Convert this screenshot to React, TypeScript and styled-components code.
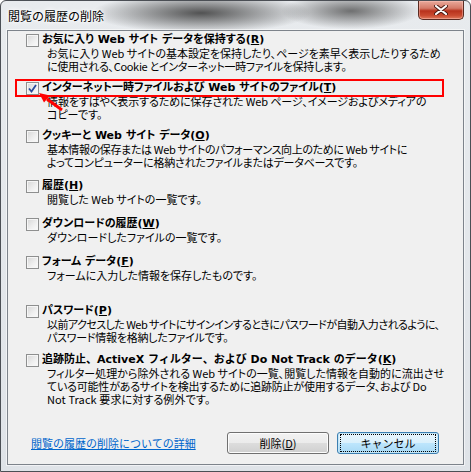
import React from "react";
import styled, { createGlobalStyle } from "styled-components";

const FONT = `"Noto Sans CJK JP", "Noto Sans", sans-serif`;
const TITLE_FONT = `"DejaVu Sans", "Noto Sans CJK JP", sans-serif`;

const Global = createGlobalStyle`
  html, body { margin: 0; padding: 0; background: #ffffff; }
  body { width: 471px; height: 472px; overflow: hidden; }
  * { box-sizing: border-box; }
`;

const Window = styled.div`
  position: relative;
  width: 471px;
  height: 472px;
  border: 1px solid #4b4f55;
  border-radius: 6px 6px 0 0;
  background:
    radial-gradient(ellipse 110px 20px at 200px 12px, rgba(55, 55, 55, 0.85), rgba(55, 55, 55, 0) 100%),
    radial-gradient(ellipse 70px 18px at 350px 10px, rgba(70, 70, 70, 0.75), rgba(70, 70, 70, 0) 100%),
    linear-gradient(180deg, #e8ebee 0%, #dfe3e8 100%);
  display: flex;
  flex-direction: column;
  padding: 0 6px 6px 6px;
  font-family: ${FONT};
`;

const TitleBar = styled.div`
  height: 29px;
  display: flex;
  justify-content: space-between;
  align-items: flex-start;
  padding-left: 1px;
`;

const TitleText = styled.div`
  font-size: 12px;
  line-height: 14px;
  margin-top: 8px;
  color: #000;
  text-shadow: 0 0 6px #fff, 0 0 4px #fff, 0 0 2px #fff;
`;

const CloseButton = styled.div`
  width: 46px;
  height: 19px;
  border: 1px solid #5a2b22;
  border-top: none;
  border-radius: 0 0 5px 5px;
  background: linear-gradient(180deg, #e9a99b 0%, #d47a68 40%, #b8321c 55%, #c94a30 80%, #e07a5c 100%);
  box-shadow: inset 0 0 0 1px rgba(255, 200, 190, 0.45);
  display: flex;
  align-items: center;
  justify-content: center;
`;

const Panel = styled.div`
  position: relative;
  flex: 1;
  background: #f0f0f0;
  border: 1px solid #7d838b;
  box-shadow: 0 0 0 1px rgba(255, 255, 255, 0.55);
  display: flex;
  flex-direction: column;
  padding: 2px 0 10px 18px;
`;

const Item = styled.div<{ $top: number }>`
  margin-top: ${(p) => p.$top}px;
  display: flex;
  flex-direction: column;
`;

const TitleRow = styled.div`
  display: flex;
  align-items: center;
  gap: 3px;
  height: 14px;
`;

const Box = styled.div`
  width: 13px;
  height: 13px;
  border: 1px solid #8e8f8f;
  background: linear-gradient(135deg, #d6d6d6 0%, #f0f0f0 60%, #fbfbfb 100%);
  box-shadow: inset 0 0 0 1px #f6f6f6;
  display: flex;
  align-items: center;
  justify-content: center;
  flex: none;
`;

const Title = styled.div<{ $wide?: boolean }>`
  font-family: ${TITLE_FONT};
  font-size: 11px;
  font-weight: bold;
  line-height: 14px;
  white-space: nowrap;
  color: #000;
  font-feature-settings: ${(p) => (p.$wide ? "normal" : `"palt"`)};
`;

const Desc = styled.div<{ $ls?: number }>`
  margin-left: 21px;
  font-size: 11px;
  line-height: 13px;
  white-space: nowrap;
  color: #000;
  font-feature-settings: "palt";
  letter-spacing: ${(p) => p.$ls ?? 0}px;
`;

const Highlight = styled.div`
  position: absolute;
  left: 7px;
  top: 48px;
  width: 429px;
  height: 18px;
  border: 2px solid #ff0000;
  pointer-events: none;
`;

const Arrow = styled.svg`
  position: absolute;
  left: 28px;
  top: 59px;
`;

const Footer = styled.div`
  margin-top: auto;
  display: flex;
  align-items: center;
  padding-right: 24px;
`;

const HelpLink = styled.a`
  flex: 1;
  margin-left: 5px;
  font-size: 11px;
  line-height: 14px;
  color: #0066cc;
  text-decoration: underline;
  cursor: pointer;
`;

const Buttons = styled.div`
  display: flex;
  gap: 8px;
`;

const Button = styled.button<{ $default?: boolean }>`
  width: 102px;
  height: 22px;
  padding: 0;
  font-family: ${FONT};
  font-size: 11px;
  color: #000;
  border-radius: 3px;
  border: 1px solid ${(p) => (p.$default ? "#3c7fb1" : "#707070")};
  background: ${(p) =>
    p.$default
      ? "linear-gradient(180deg, #eaf6fd 0%, #d9f0fc 50%, #bee6fd 50%, #a7d9f5 100%)"
      : "linear-gradient(180deg, #f2f2f2 0%, #ebebeb 50%, #dddddd 50%, #cfcfcf 100%)"};
  box-shadow: inset 0 0 0 1px ${(p) => (p.$default ? "#c4e5f6" : "#fcfcfc")};
  display: flex;
  align-items: center;
  justify-content: center;
`;

const Focus = styled.span`
  display: flex;
  align-items: center;
  justify-content: center;
  width: 94px;
  height: 16px;
  outline: 1px dotted #000;
`;

const Check = () => (
  <svg width="9" height="9" viewBox="0 0 9 9">
    <path d="M1 4.5 L3.5 7.5 L8 1" fill="none" stroke="#2a4b9b" strokeWidth="1.8" />
  </svg>
);

type Line = { text: string; ls?: number };
type Entry = { top: number; title: React.ReactNode; desc: Line[]; checked?: boolean; wide?: boolean };

const entries: Entry[] = [
  {
    top: 0,
    title: <>お気に入り Web サイト データを保持する(<u>R</u>)</>,
    desc: [
      { text: "お気に入り Web サイトの基本設定を保持したり、ページを素早く表示したりするため" },
      { text: "に使用される、Cookie とインターネット一時ファイルを保持します。", ls: -0.3 },
    ],
  },
  {
    top: 8,
    checked: true,
    title: <>インターネット一時ファイルおよび Web サイトのファイル(<u>T</u>)</>,
    desc: [
      { text: "情報をすばやく表示するために保存された Web ページ、イメージおよびメディアの", ls: -0.1 },
      { text: "コピーです。" },
    ],
  },
  {
    top: 8,
    title: <>クッキーと Web サイト データ(<u>O</u>)</>,
    desc: [
      { text: "基本情報の保存または Web サイトのパフォーマンス向上のために Web サイトに", ls: -0.35 },
      { text: "よってコンピューターに格納されたファイルまたはデータベースです。", ls: -0.25 },
    ],
  },
  { top: 10, title: <>履歴(<u>H</u>)</>, desc: [{ text: "閲覧した Web サイトの一覧です。" }] },
  { top: 11, title: <>ダウンロードの履歴(<u>W</u>)</>, desc: [{ text: "ダウンロードしたファイルの一覧です。" }] },
  { top: 11, title: <>フォーム データ(<u>F</u>)</>, desc: [{ text: "フォームに入力した情報を保存したものです。" }] },
  {
    top: 22,
    title: <>パスワード(<u>P</u>)</>,
    desc: [
      { text: "以前アクセスした Web サイトにサインインするときにパスワードが自動入力されるように、", ls: -0.55 },
      { text: "パスワード情報を格納したファイルです。", ls: -0.25 },
    ],
  },
  {
    top: 9,
    wide: true,
    title: <>追跡防止、ActiveX フィルター、および Do Not Track のデータ(<u>K</u>)</>,
    desc: [
      { text: "フィルター処理から除外される Web サイトの一覧、閲覧した情報を自動的に流出させ" },
      { text: "ている可能性があるサイトを検出するために追跡防止が使用するデータ、および Do", ls: -0.2 },
      { text: "Not Track 要求に対する例外です。", ls: 0.1 },
    ],
  },
];

export default function App() {
  return (
    <>
      <Global />
      <Window>
        <TitleBar>
          <TitleText>閲覧の履歴の削除</TitleText>
          <CloseButton>
            <svg width="14" height="10" viewBox="0 0 14 10">
              <path d="M2 1 L12 9 M12 1 L2 9" stroke="#4a1a12" strokeWidth="4" strokeLinecap="round" />
              <path d="M2 1 L12 9 M12 1 L2 9" stroke="#ffffff" strokeWidth="2.2" strokeLinecap="round" />
            </svg>
          </CloseButton>
        </TitleBar>
        <Panel>
          {entries.map((e, i) => (
            <Item key={i} $top={e.top}>
              <TitleRow>
                <Box>{e.checked && <Check />}</Box>
                <Title $wide={e.wide}>{e.title}</Title>
              </TitleRow>
              {e.desc.map((d, j) => (
                <Desc key={j} $ls={d.ls}>
                  {d.text}
                </Desc>
              ))}
            </Item>
          ))}
          <Footer>
            <HelpLink>閲覧の履歴の削除についての詳細</HelpLink>
            <Buttons>
              <Button>
                削除(<u>D</u>)
              </Button>
              <Button $default>
                <Focus>キャンセル</Focus>
              </Button>
            </Buttons>
          </Footer>
          <Highlight />
          <Arrow width="30" height="24" viewBox="0 0 30 24">
            <line x1="26" y1="20" x2="11" y2="9" stroke="#ff0000" strokeWidth="3" />
            <polygon points="3,3 14,5.5 8,12.5" fill="#ff0000" />
          </Arrow>
        </Panel>
      </Window>
    </>
  );
}
